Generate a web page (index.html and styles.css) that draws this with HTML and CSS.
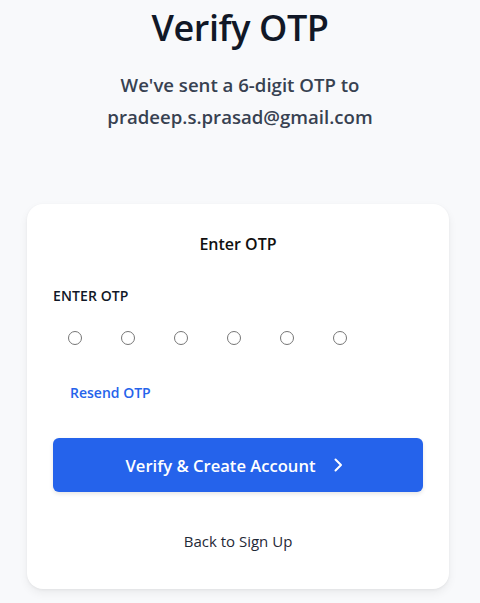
FILE: index.html
```html
<!DOCTYPE html>
<html lang="en">
<head>
<meta charset="utf-8">
<link rel="stylesheet" href="styles.css">
</head>
<body>
<main class="page">
  <header class="intro">
    <h1 class="title">Verify OTP</h1>
    <p class="subtitle">We've sent a 6-digit OTP to<br>pradeep.s.prasad@gmail.com</p>
  </header>
  <section class="card">
    <h2 class="card-title">Enter OTP</h2>
    <div class="label">ENTER OTP</div>
    <div class="otp-row">
      <span class="dot"></span><span class="dot"></span><span class="dot"></span><span class="dot"></span><span class="dot"></span><span class="dot"></span>
    </div>
    <a class="resend">Resend OTP</a>
    <button class="primary">Verify &amp; Create Account
      <svg class="chev" width="10" height="14" viewBox="0 0 10 14"><path d="M2.5 1.5 L8 7 L2.5 12.5" fill="none" stroke="#fff" stroke-width="2" stroke-linecap="round" stroke-linejoin="round"/></svg>
    </button>
    <a class="back">Back to Sign Up</a>
  </section>
</main>
</body>
</html>
```
FILE: styles.css
```css
* { box-sizing: border-box; }
html, body { margin: 0; padding: 0; }
body {
  background: #f8f9fb;
  font-family: "Open Sans", "Noto Sans", sans-serif;
  width: 480px;
  height: 603px;
  overflow: hidden;
}
.page {
  display: flex;
  flex-direction: column;
  align-items: center;
}
.intro { text-align: center; padding-top: 3px; }
.title {
  margin: 0;
  font-size: 36px;
  font-weight: 600;
  color: #111827;
  line-height: 50px;
  letter-spacing: -0.4px;
}
.subtitle {
  margin: 16px 0 0;
  font-size: 18.6px;
  font-weight: 600;
  color: #374151;
  line-height: 32px;
}
.card {
  margin-top: 71px;
  width: 422px;
  margin-left: -4px;
  background: #fff;
  border-radius: 16px;
  box-shadow: 0 4px 10px rgba(0,0,0,0.06), 0 1px 3px rgba(0,0,0,0.05);
  padding: 26px 26px 38px;
  display: flex;
  flex-direction: column;
}
.card-title {
  margin: 0;
  text-align: center;
  font-size: 16px;
  font-weight: 600;
  color: #111;
  line-height: 28px;
}
.label {
  margin-top: 28px;
  font-size: 14px;
  font-weight: 600;
  color: #111827;
  letter-spacing: 0.1px;
  line-height: 20px;
}
.otp-row {
  display: flex;
  gap: 39px;
  padding-left: 15px;
  margin-top: 25px;
}
.dot {
  width: 14px;
  height: 14px;
  border-radius: 50%;
  border: 1.3px solid #767676;
  background: #fff;
}
.resend {
  margin-top: 38px;
  padding-left: 17px;
  font-size: 14px;
  font-weight: 600;
  color: #2563eb;
  line-height: 20px;
}
.primary {
  margin-top: 35px;
  height: 54px;
  border: none;
  border-radius: 6px;
  background: #2563eb;
  color: #fff;
  font-family: inherit;
  font-size: 16.6px;
  font-weight: 600;
  display: flex;
  align-items: center;
  justify-content: center;
  gap: 17px;
  box-shadow: 0 2px 4px rgba(0,0,0,0.1);
  padding: 0 8px 0 0;
}
.back {
  margin-top: 39px;
  text-align: center;
  font-size: 15px;
  font-weight: 500;
  color: #1f2937;
  line-height: 20px;
}
```
